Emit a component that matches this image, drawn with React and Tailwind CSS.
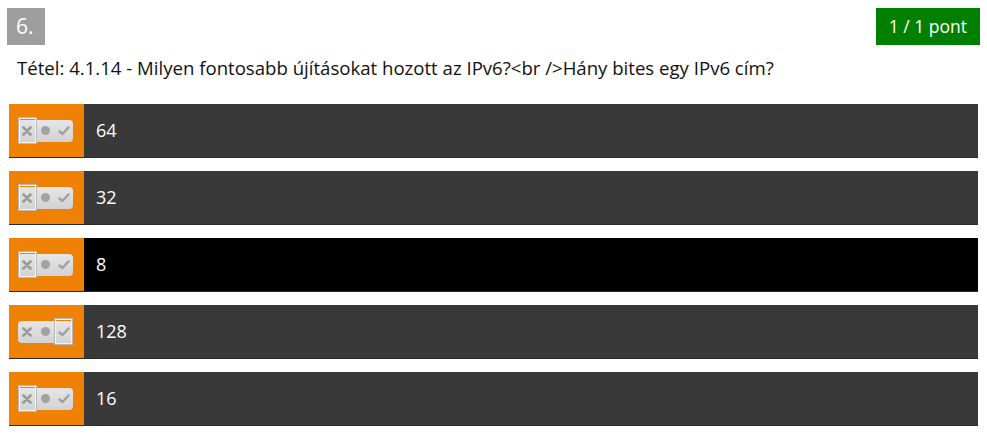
import React from "react";

function Toggle({ state }) {
  return (
    <div className="relative w-[55px] h-[22px] rounded-[4px] bg-gradient-to-b from-[#e6e6e6] to-[#d2d2d2] flex items-center">
      <div className="flex-1 flex justify-center items-center">
        <svg width="10" height="10" viewBox="0 0 10 10">
          <path d="M1.5 1.5 L8.5 8.5 M8.5 1.5 L1.5 8.5" stroke="#9a9a9a" strokeWidth="2.6" strokeLinecap="round" />
        </svg>
      </div>
      <div className="flex-1 flex justify-center items-center">
        <div className="w-[9px] h-[9px] rounded-full bg-[#a2a2a2]" />
      </div>
      <div className="flex-1 flex justify-center items-center">
        <svg width="12" height="10" viewBox="0 0 12 10">
          <path d="M1.5 5.5 L4.5 8 L10.5 1.5" stroke="#a0a0a0" strokeWidth="2.4" fill="none" strokeLinecap="round" strokeLinejoin="round" />
        </svg>
      </div>
      <div
        className={
          "absolute top-[-3px] w-[19px] h-[27px] border border-[#b8b8b8] shadow-[inset_0_0_0_1px_#f4f4f4] " +
          (state === "check" ? "right-0" : "left-0")
        }
      />
    </div>
  );
}

function Row({ label, black, state }) {
  return (
    <div className={"flex h-[54px] mb-[13px] border-b border-[#2a2a2a] " + (black ? "bg-black" : "bg-[#393939]")}>
      <div className="w-[75px] bg-[#ef8204] flex items-center pl-[9px]">
        <Toggle state={state} />
      </div>
      <div className="flex items-center pl-[12px] text-white text-[18px]">{label}</div>
    </div>
  );
}

export default function App() {
  return (
    <div className="w-[987px] h-[448px] bg-white pt-[8px] px-[7px]" style={{ fontFamily: '"Open Sans", sans-serif' }}>
      <div className="flex justify-between">
        <div className="w-[38px] h-[37px] bg-[#9e9e9e] text-white text-[21px] flex items-center pl-[9px]">6.</div>
        <div className="h-[37px] bg-[#008000] text-white text-[17.5px] flex items-center px-[13px]">1 / 1 pont</div>
      </div>
      <div className="pl-[10px] mt-[10px] text-[18.6px] text-[#111] leading-[26px]">
        Tétel: 4.1.14 - Milyen fontosabb újításokat hozott az IPv6?&lt;br /&gt;Hány bites egy IPv6 cím?
      </div>
      <div className="mt-[23px] pl-[2px] pr-[2px]">
        <Row label="64" state="x" />
        <Row label="32" state="x" />
        <Row label="8" state="x" black />
        <Row label="128" state="check" />
        <Row label="16" state="x" />
      </div>
    </div>
  );
}
